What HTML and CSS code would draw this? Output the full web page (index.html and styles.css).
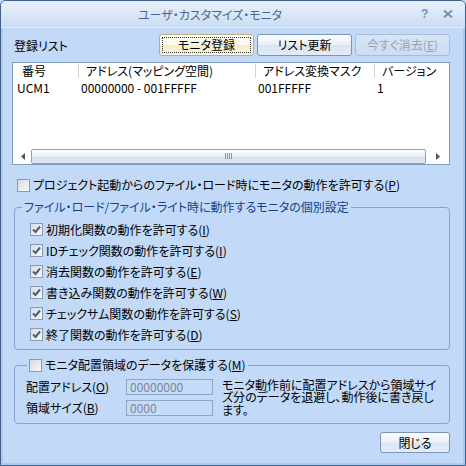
FILE: index.html
```html
<!DOCTYPE html>
<html lang="ja">
<head>
<meta charset="utf-8">
<title>ユーザ・カスタマイズ・モニタ</title>
<link rel="stylesheet" href="styles.css">
</head>
<body>
<div class="win">
  <div class="titlebar">
    <span class="title">ユーザ・カスタマイズ・モニタ</span>
    <span class="ctrls">
      <span class="help">?</span>
      <svg class="xicon" width="10" height="8" viewBox="0 0 10 8"><path d="M1 0.5 L9 7.5 M9 0.5 L1 7.5" stroke="#7390b8" stroke-width="2" fill="none"/></svg>
    </span>
  </div>
  <div class="body">
    <div class="row1">
      <span class="lbl">登録リスト</span>
      <div class="btns">
        <button class="btn focus"><span class="focusring">モニタ登録</span></button>
        <button class="btn">リスト更新</button>
        <button class="btn disabled">今すぐ消去(<u>E</u>)</button>
      </div>
    </div>
    <div class="list">
      <div class="lhead">
        <span class="c1 hc">番号</span>
        <span class="c2 hc sep">アドレス(マッピング空間)</span>
        <span class="c3 hc sep">アドレス変換マスク</span>
        <span class="c4 hc sep">バージョン</span>
      </div>
      <div class="lrow">
        <span class="c1 dc">UCM1</span>
        <span class="c2 dc">00000000 - 001FFFFF</span>
        <span class="c3 dc">001FFFFF</span>
        <span class="c4 dc">1</span>
      </div>
      <div class="lspacer"></div>
      <div class="hscroll">
        <span class="arr left"><svg width="4" height="7" viewBox="0 0 4 7"><path d="M4 0 L0 3.5 L4 7 Z" fill="#44546e"/></svg></span>
        <span class="thumb"><span class="grip"></span></span>
        <span class="arr right"><svg width="4" height="7" viewBox="0 0 4 7"><path d="M0 0 L4 3.5 L0 7 Z" fill="#44546e"/></svg></span>
      </div>
    </div>
    <label class="chk top"><span class="box"></span><span>プロジェクト起動からのファイル・ロード時にモニタの動作を許可する(<u>P</u>)</span></label>
    <fieldset class="grp g1">
      <legend>ファイル・ロード/ファイル・ライト時に動作するモニタの個別設定</legend>
      <label class="chk item"><span class="box on"><svg width="11" height="11" viewBox="0 0 11 11"><path d="M2 5.5 L4.5 8 L9 2.5" stroke="#4b5f86" stroke-width="2" fill="none"/></svg></span><span>初期化関数の動作を許可する(<u>I</u>)</span></label>
      <label class="chk item"><span class="box on"><svg width="11" height="11" viewBox="0 0 11 11"><path d="M2 5.5 L4.5 8 L9 2.5" stroke="#4b5f86" stroke-width="2" fill="none"/></svg></span><span>IDチェック関数の動作を許可する(<u>I</u>)</span></label>
      <label class="chk item"><span class="box on"><svg width="11" height="11" viewBox="0 0 11 11"><path d="M2 5.5 L4.5 8 L9 2.5" stroke="#4b5f86" stroke-width="2" fill="none"/></svg></span><span>消去関数の動作を許可する(<u>E</u>)</span></label>
      <label class="chk item"><span class="box on"><svg width="11" height="11" viewBox="0 0 11 11"><path d="M2 5.5 L4.5 8 L9 2.5" stroke="#4b5f86" stroke-width="2" fill="none"/></svg></span><span>書き込み関数の動作を許可する(<u>W</u>)</span></label>
      <label class="chk item"><span class="box on"><svg width="11" height="11" viewBox="0 0 11 11"><path d="M2 5.5 L4.5 8 L9 2.5" stroke="#4b5f86" stroke-width="2" fill="none"/></svg></span><span>チェックサム関数の動作を許可する(<u>S</u>)</span></label>
      <label class="chk item"><span class="box on"><svg width="11" height="11" viewBox="0 0 11 11"><path d="M2 5.5 L4.5 8 L9 2.5" stroke="#4b5f86" stroke-width="2" fill="none"/></svg></span><span>終了関数の動作を許可する(<u>D</u>)</span></label>
    </fieldset>
    <fieldset class="grp g2">
      <legend><label class="chk"><span class="box"></span><span>モニタ配置領域のデータを保護する(<u>M</u>)</span></label></legend>
      <div class="g2body">
        <div class="fields">
          <span class="flbl">配置アドレス(<u>O</u>)</span>
          <span class="inp">00000000</span>
          <span class="flbl">領域サイズ(<u>B</u>)</span>
          <span class="inp">0000</span>
        </div>
        <p class="desc">モニタ動作前に配置アドレスから領域サイ<br>ズ分のデータを退避し、動作後に書き戻し<br>ます。</p>
      </div>
    </fieldset>
    <div class="foot">
      <button class="btn closebtn">閉じる</button>
    </div>
  </div>
</div>
</body>
</html>
```

FILE: styles.css
```css
* { box-sizing: border-box; }
html, body { margin: 0; padding: 0; }
body {
  width: 466px;
  height: 466px;
  overflow: hidden;
  background: #c2daf8;
  font-family: "Noto Sans CJK JP", "Noto Sans", sans-serif;
  font-size: 12px;
  color: #000;
}
.win {
  width: 466px;
  height: 466px;
  border: 1px solid #3f5f8a;
  border-radius: 6px 6px 0 0;
  display: flex;
  flex-direction: column;
  background: #c2daf8;
  overflow: hidden;
  font-feature-settings: "palt";
}
.titlebar {
  flex: none;
  height: 27px;
  display: flex;
  align-items: center;
  background: linear-gradient(#e8f0fb, #dce8f8 45%, #cbdcf3);
  border-bottom: 1px solid #dce9f9;
}
.title {
  flex: 1;
  text-align: center;
  color: #4a6894;
  line-height: 16px;
  padding-top: 1px;
}
.ctrls {
  flex: none;
  width: 46px;
  display: flex;
  align-items: center;
  gap: 15px;
  padding-left: 2px;
}
.help {
  font-family: "Liberation Sans", sans-serif;
  font-weight: bold;
  font-size: 12px;
  color: #7390b8;
  line-height: 12px;
}
.xicon { display: block; }
.body {
  flex: 1;
  display: flex;
  flex-direction: column;
  padding: 0 13px 0 9px;
  border-left: 2px solid #b0c9e9;
  border-right: 2px solid #b0c9e9;
  border-bottom: 2px solid #b0c9e9;
}
.row1 {
  margin-top: 6px;
  height: 22px;
  display: flex;
  align-items: center;
  justify-content: space-between;
}
.lbl { padding-left: 2px; line-height: 16px; padding-top: 2px; }
.btns { display: flex; gap: 3px; }
.btn {
  font: inherit;
  font-feature-settings: "palt";
  width: 95px;
  height: 22px;
  padding: 0;
  border: 1px solid #7b94b8;
  border-radius: 3px;
  background: linear-gradient(#fbfcfe, #eaf0f8 48%, #dae5f3 52%, #e3ecf8);
  color: #000;
  display: flex;
  align-items: center;
  justify-content: center;
  line-height: 16px;
}
.btn.focus {
  border-color: #b8ae82;
  background: linear-gradient(#fffef7, #fbf8e6 50%, #f3eecf 52%, #f8f4dc);
  padding: 2px;
}
.focusring {
  flex: 1;
  align-self: stretch;
  border: 1px dotted #333;
  display: flex;
  align-items: center;
  justify-content: center;
}
.btn.disabled {
  border-color: #a9bdd9;
  background: linear-gradient(#d7e5f7, #cddcf1);
  color: #98a4b4;
}
.list {
  margin-top: 6px;
  height: 103px;
  border: 1px solid #7f9db9;
  background: #fff;
  display: flex;
  flex-direction: column;
}
.lhead, .lrow { display: flex; flex: none; }
.lhead { height: 16px; align-items: center; }
.lrow { height: 17px; align-items: center; }
.c1 { width: 65px; }
.c2 { width: 177px; }
.c3 { width: 119px; }
.c4 { flex: 1; }
.hc { padding-left: 9px; line-height: 14px; white-space: nowrap; }
.hc.sep { border-left: 1px solid #c9d2de; padding-left: 7px; }
.dc { padding-left: 3px; white-space: nowrap; line-height: 15px; }
.lrow .c1 { padding-left: 4px; }
.lspacer { flex: 1; }
.hscroll {
  flex: none;
  height: 16px;
  display: flex;
  align-items: center;
  margin-bottom: 0;
}
.arr { display: flex; align-items: center; }
.arr.left { width: 18px; padding-left: 8px; }
.thumb {
  width: 395px;
  height: 15px;
  border: 1px solid #8b9fbf;
  border-radius: 2px;
  background: linear-gradient(#fcfdfe, #e9eff7 50%, #d5e0ee 52%, #dce6f2);
  display: flex;
  align-items: center;
  justify-content: center;
}
.grip {
  width: 8px;
  height: 6px;
  background: repeating-linear-gradient(90deg, #8a97aa 0 1px, transparent 1px 2px);
}
.arr.right { flex: 1; justify-content: flex-end; padding-right: 9px; }
.chk {
  display: flex;
  align-items: center;
  gap: 3px;
  height: 16px;
  line-height: 16px;
  white-space: nowrap;
}
.chk.top { margin-top: 12px; padding-left: 5px; }
.box {
  flex: none;
  width: 13px;
  height: 13px;
  border: 1px solid #8e9aab;
  background: linear-gradient(135deg, #d9dcdf, #f6f7f8);
  display: flex;
  align-items: center;
  justify-content: center;
}
.box svg { display: block; }
.grp {
  margin: 6px 0 0 2px;
  min-width: 0;
  width: 436px;
  border: 1px solid #86a3cd;
  border-radius: 4px;
}
.g1 { padding: 4px 0 4px 15px; }
.g1 legend {
  margin-left: -8px;
  padding: 0 2px;
  height: 16px;
  line-height: 16px;
  color: #15428b;
  white-space: nowrap;
}
.chk.item { height: 21px; }
.g2 { margin-top: 7px; padding: 3px 0 5px 11px; }
.g2 legend {
  margin-left: 1px;
  padding: 0 2px;
  height: 16px;
}
.g2body { display: flex; }
.fields {
  display: grid;
  grid-template-columns: 100px 87px;
  grid-auto-rows: 21px;
  align-items: center;
}
.flbl { line-height: 16px; white-space: nowrap; }
.inp {
  height: 16px;
  border: 1px solid #8fa6c6;
  background: #c5dbf7;
  color: #7d8898;
  padding-left: 3px;
  line-height: 14px;
  font-size: 12px;
}
.desc {
  margin: 0 0 0 9px;
  padding-top: 3px;
  line-height: 12.3px;
  white-space: nowrap;
}
.foot {
  margin-top: 8px;
  display: flex;
  justify-content: flex-end;
}
.closebtn { width: 70px; height: 21px; }
```
